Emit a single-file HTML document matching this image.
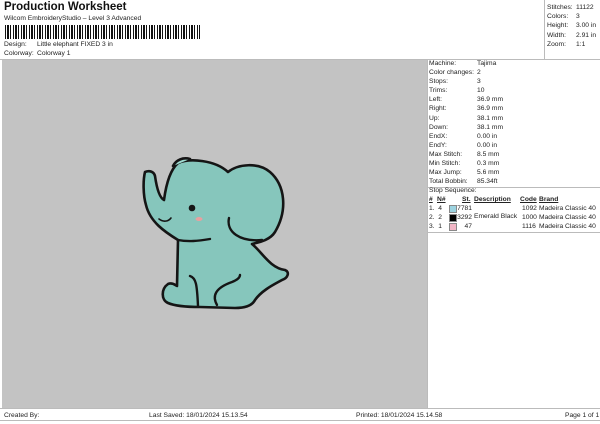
<!DOCTYPE html>
<html><head><style>
body{margin:0;width:600px;height:424px;background:#fff;font-family:"Liberation Sans",sans-serif;font-size:6.7px;color:#222;position:relative;overflow:hidden}
.a{position:absolute;white-space:nowrap}
.bc{position:absolute;left:5px;top:25px;width:195px;height:14px;background:repeating-linear-gradient(90deg,#111 0 1px,#fff 1px 2px,#111 2px 4px,#fff 4px 5px,#111 5px 6px,#fff 6px 8px)}
</style></head><body>
<div class="a" style="left:4px;top:1px;font-size:11.5px;font-weight:bold;color:#111">Production Worksheet</div>
<div class="a" style="left:4px;top:15px">Wilcom EmbroideryStudio – Level 3 Advanced</div>
<div class="bc"></div>
<div class="a" style="left:4px;top:41px">Design:</div><div class="a" style="left:37px;top:41px">Little elephant FIXED 3 in</div>
<div class="a" style="left:4px;top:50px">Colorway:</div><div class="a" style="left:37px;top:50px">Colorway 1</div>
<div class="a" style="left:0;top:59px;width:600px;border-top:1px solid #bbb"></div>
<div class="a" style="left:544px;top:0;height:59px;border-left:1px solid #bbb"></div>
<div class="a" style="left:547px;top:3px;line-height:9.2px">Stitches:<br>Colors:<br>Height:<br>Width:<br>Zoom:</div>
<div class="a" style="left:576px;top:3px;line-height:9.2px">11122<br>3<br>3.00 in<br>2.91 in<br>1:1</div>
<div class="a" style="left:2px;top:60px;width:425px;height:348px;background:#c3c3c3"></div>
<div class="a" style="left:427px;top:60px;height:348px;border-left:1px solid #bbb"></div>
<div class="a" style="left:429px;top:59px;line-height:9.1px">Machine:<br>Color changes:<br>Stops:<br>Trims:<br>Left:<br>Right:<br>Up:<br>Down:<br>EndX:<br>EndY:<br>Max Stitch:<br>Min Stitch:<br>Max Jump:<br>Total Bobbin:</div>
<div class="a" style="left:477px;top:59px;line-height:9.1px">Tajima<br>2<br>3<br>10<br>36.9 mm<br>36.9 mm<br>38.1 mm<br>38.1 mm<br>0.00 in<br>0.00 in<br>8.5 mm<br>0.3 mm<br>5.6 mm<br>85.34ft</div>
<div class="a" style="left:427px;top:187px;width:173px;border-top:1px solid #bbb"></div>
<div class="a" style="left:429px;top:187px">Stop Sequence:</div>
<div class="a" style="left:429px;top:196px;font-weight:bold;text-decoration:underline">#</div>
<div class="a" style="left:437px;top:196px;font-weight:bold;text-decoration:underline">N#</div>
<div class="a" style="left:462px;top:196px;font-weight:bold;text-decoration:underline">St.</div>
<div class="a" style="left:474px;top:196px;font-weight:bold;text-decoration:underline">Description</div>
<div class="a" style="left:520px;top:196px;font-weight:bold;text-decoration:underline">Code</div>
<div class="a" style="left:539px;top:196px;font-weight:bold;text-decoration:underline">Brand</div>
<div class="a" style="left:429px;top:204px;line-height:9.2px">1.&nbsp; 4<br>2.&nbsp; 2<br>3.&nbsp; 1</div>
<div class="a" style="left:449px;top:205px;width:6px;height:6px;background:#9cd3e0;border:1px solid #888"></div>
<div class="a" style="left:449px;top:214px;width:6px;height:6px;background:#000;border:1px solid #888"></div>
<div class="a" style="left:449px;top:223px;width:6px;height:6px;background:#f2b6c6;border:1px solid #888"></div>
<div class="a" style="left:455px;top:204px;line-height:9.2px;width:17px;text-align:right">7781<br>3292<br>47</div>
<div class="a" style="left:474px;top:213px">Emerald Black</div>
<div class="a" style="left:522px;top:204px;line-height:9.2px">1092<br>1000<br>1116</div>
<div class="a" style="left:539px;top:204px;line-height:9.2px">Madeira Classic 40<br>Madeira Classic 40<br>Madeira Classic 40</div>
<div class="a" style="left:427px;top:232px;width:173px;border-top:1px solid #bbb"></div>
<div class="a" style="left:0;top:408px;width:600px;border-top:1px solid #bbb"></div>
<div class="a" style="left:0;top:420px;width:600px;border-top:1px solid #bbb"></div>
<div class="a" style="left:4px;top:412px">Created By:</div>
<div class="a" style="left:149px;top:412px">Last Saved: 18/01/2024 15.13.54</div>
<div class="a" style="left:356px;top:412px">Printed: 18/01/2024 15.14.58</div>
<div class="a" style="left:565px;top:412px">Page 1 of 1</div>
<svg class="a" style="left:0;top:0" width="600" height="424">
<g fill="#86c6bc" stroke="#151515" stroke-width="2.6" stroke-linejoin="round" stroke-linecap="round">
<path d="M145,172 C150,170 154,172 155,176 C157,190 160,198 164,200 C166,185 170,170 178,163 C190,158 215,160 228,172 C238,164 258,162 270,172 C285,185 288,210 275,232 C270,240 260,242 252,244 C262,252 270,268 285,270 C290,272 288,278 282,280 C275,284 262,290 255,300 C252,306 245,308 235,308 L200,307 C185,307 175,306 168,303 C161,300 161,289 168,284 C173,282 176,286 177,286 L178,240 C165,232 150,222 146,205 C143,195 143,180 145,172 Z"/>
<path d="M173,166 C176,160 183,157 190,159" fill="#9fdcd2"/>
</g>
<g fill="none" stroke="#151515" stroke-width="2.4" stroke-linecap="round">
<path d="M178,240 C188,242 198,241 210,239"/>
<path d="M229,218 C226,232 240,242 262,240"/>
<path d="M190,276 C196,278 197,284 198,306"/>
<path d="M217,305 C212,296 215,288 232,282 C237,280 240,278 240,275"/>
<path d="M159,219 C163,222 168,222 171,218" stroke-width="1.6"/>
</g>
<circle cx="192" cy="208" r="3.3" fill="#151515"/>
<ellipse cx="199" cy="219" rx="3.5" ry="2" fill="#e8a0a0"/>
</svg>
</body></html>
